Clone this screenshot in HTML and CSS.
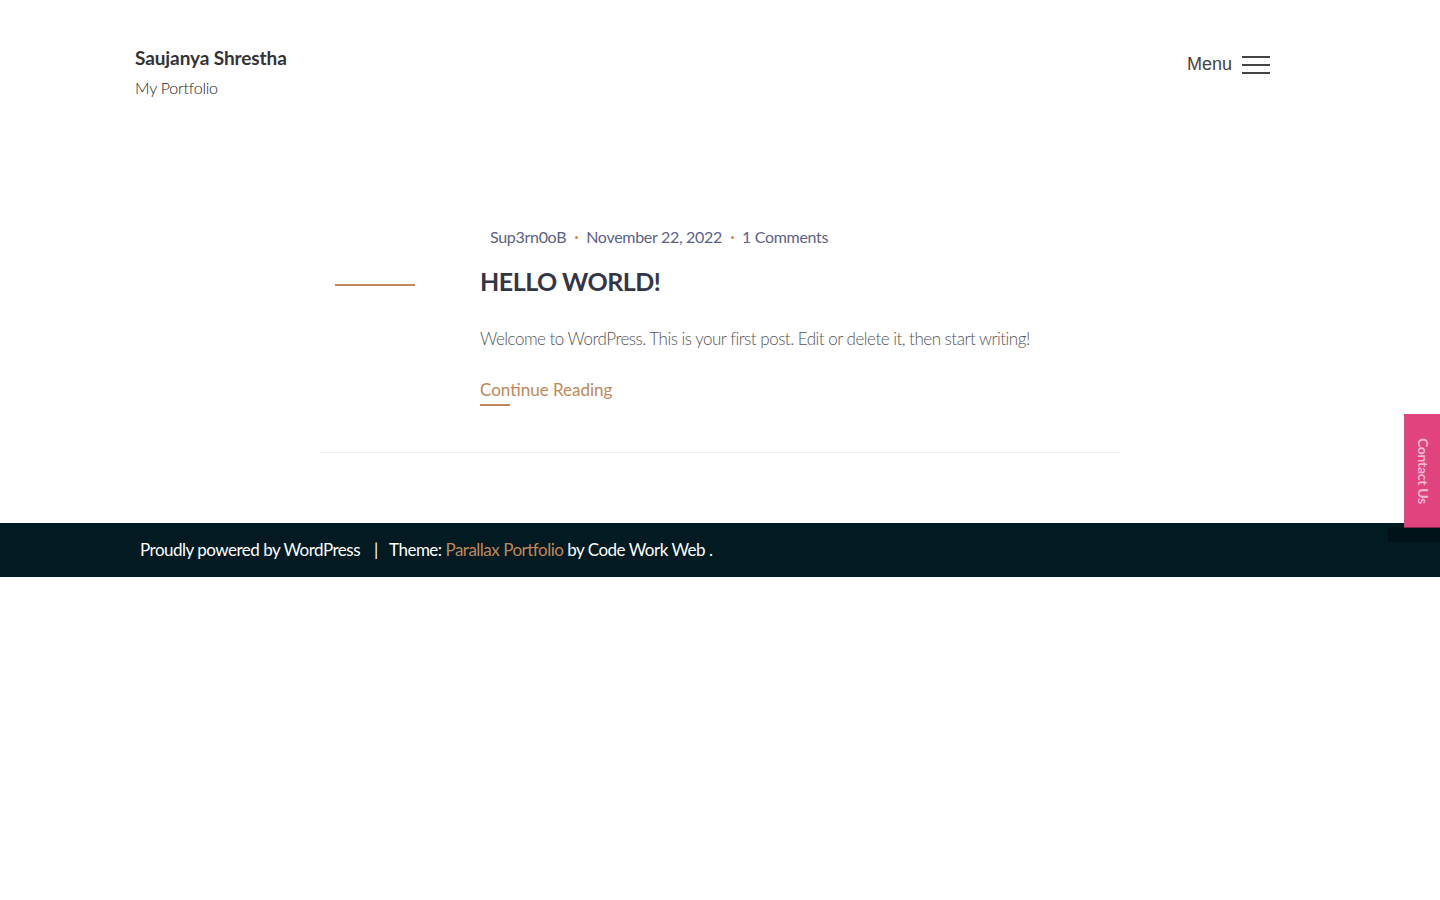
FILE: index.html
```html
<!DOCTYPE html>
<html lang="en">
<head>
<meta charset="utf-8">
<title>Saujanya Shrestha – My Portfolio</title>
<link rel="stylesheet" href="styles.css">
</head>
<body>
<header class="site-header">
  <div class="branding">
    <a class="site-title" href="#">Saujanya Shrestha</a>
    <p class="site-desc">My Portfolio</p>
  </div>
  <button class="menu-toggle" type="button">
    <span class="menu-label">Menu</span>
    <span class="burger"><i></i><i></i><i></i></span>
  </button>
</header>

<main class="content">
  <article class="post">
    <div class="post-side"><span class="side-line"></span></div>
    <div class="post-body">
      <div class="post-meta">
        <span class="meta-item">Sup3rn0oB</span>
        <span class="dot"></span>
        <span class="meta-item">November 22, 2022</span>
        <span class="dot"></span>
        <span class="meta-item">1 Comments</span>
      </div>
      <h2 class="post-title">HELLO WORLD!</h2>
      <p class="excerpt">Welcome to WordPress. This is your first post. Edit or delete it, then start writing!</p>
      <a class="more" href="#">Continue Reading</a>
    </div>
  </article>
</main>

<footer class="site-footer">
  <p>Proudly powered by WordPress <span class="sep">|</span> Theme: <a href="#">Parallax Portfolio</a> by Code Work Web .</p>
</footer>

<a class="contact-tab" href="#"><span>Contact Us</span></a>
</body>
</html>
```

FILE: styles.css
```css
* { box-sizing: border-box; }
html, body { margin: 0; padding: 0; }
body {
  font-family: "Lato", "Open Sans", sans-serif;
  background: #fff;
  color: #555;
  font-size: 17px;
  font-weight: 300;
  letter-spacing: -0.5px;
}
a { text-decoration: none; }

.site-header {
  display: flex;
  justify-content: space-between;
  align-items: flex-start;
  padding: 45px 170px 0 135px;
  height: 225px;
}
.branding { display: flex; flex-direction: column; }
.site-title {
  font-size: 19px;
  font-weight: 700;
  color: #333;
  line-height: 26px;
  letter-spacing: -0.1px;
}
.site-desc {
  margin: 6px 0 0;
  font-size: 16px;
  font-weight: 300;
  color: #222;
  line-height: 22px;
  letter-spacing: -0.2px;
}
.menu-toggle {
  display: flex;
  align-items: center;
  gap: 10px;
  background: none;
  border: 0;
  padding: 0;
  margin-top: 9px;
  cursor: pointer;
}
.menu-label {
  font-family: "Liberation Sans", Arial, sans-serif;
  font-size: 18px;
  color: #444;
  letter-spacing: 0;
}
.burger { display: flex; flex-direction: column; gap: 6px; width: 28px; }
.burger i { display: block; height: 2px; background: #444; }

.content { display: flex; justify-content: center; }
.post {
  width: 800px;
  display: flex;
  border-bottom: 1px solid #eee;
  padding-bottom: 46px;
}
.post-side { width: 160px; padding: 59px 0 0 15px; }
.side-line { display: block; width: 80px; height: 2px; background: #c0895a; }

.post-meta {
  display: flex;
  align-items: center;
  gap: 8px;
  padding-left: 10px;
  color: #5c6283;
  font-size: 16px;
  font-weight: 400;
  line-height: 24px;
  letter-spacing: -0.3px;
}
.meta-item + .dot { margin-left: 1px; }
.dot { width: 3px; height: 3px; border-radius: 50%; background: #d9843f; }
.post-title {
  margin: 17px 0 0;
  font-size: 25px;
  font-weight: 700;
  color: #333646;
  line-height: 30px;
}
.excerpt {
  margin: 31px 0 0;
  color: #555;
  line-height: 24px;
}
.more {
  display: inline-block;
  margin-top: 27px;
  color: #c0875a;
  font-weight: 400;
  font-size: 17px;
  line-height: 24px;
  letter-spacing: 0;
  position: relative;
  padding-bottom: 4px;
}
.more::after {
  content: "";
  position: absolute;
  left: 0; bottom: 0;
  width: 30px; height: 2px;
  background: #c0875a;
}

.site-footer {
  margin-top: 70px;
  background: #021a22;
  color: #fff;
  height: 54px;
  display: flex;
  align-items: center;
  padding-left: 140px;
}
.site-footer p { margin: 0; font-size: 17px; font-weight: 400; line-height: 22px; margin-top: -1px; }
.site-footer a { color: #c0875a; font-weight: 400; }
.sep { margin: 0 8px 0 10px; }

.contact-tab {
  position: fixed;
  right: 0;
  top: 414px;
  width: 36px;
  height: 114px;
  background: #e0437e;
  border-bottom: 1px solid #b8335f;
  display: flex;
  align-items: center;
  justify-content: center;
}
.contact-tab::after {
  content: "";
  position: absolute;
  right: 0;
  top: 100%;
  width: 52px;
  height: 15px;
  background: rgba(0, 0, 0, 0.25);
}
.contact-tab span {
  writing-mode: vertical-rl;
  color: #f8b9d1;
  font-size: 14px;
  font-weight: 700;
  letter-spacing: -0.3px;
  margin-left: 3px;
}
```
